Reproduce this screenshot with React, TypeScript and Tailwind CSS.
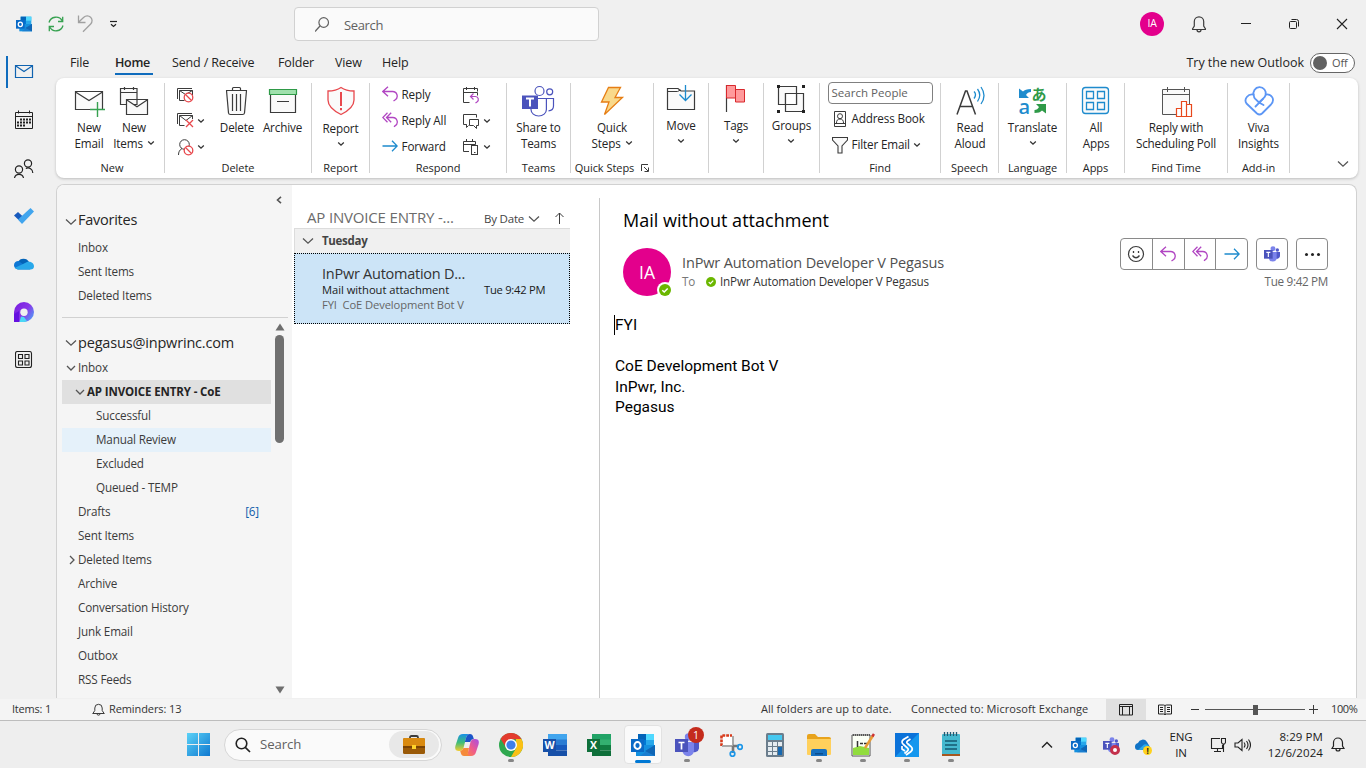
import React from "react";

type IconProps = { v: string; c: string; children: React.ReactNode };

/* Line-drawn icon; the view box is expressed in window pixels. */
const Svg = ({ v, c, children }: IconProps) => (
  <svg viewBox={v} className={`shrink-0 ${c}`} fill="none" stroke="#3b3b3b" strokeWidth="1">
    {children}
  </svg>
);

const Down = ({ c = "" }: { c?: string }) => (
  <svg viewBox="0 0 8 6" className={`h-[6px] w-[8px] shrink-0 ${c}`} fill="none" stroke="#333" strokeWidth="1.3">
    <path d="M1.200 1.500 4 4.200 6.800 1.500" />
  </svg>
);

const Caret = ({ c = "" }: { c?: string }) => (
  <svg viewBox="0 0 12 8" className={`h-[8px] w-[12px] shrink-0 ${c}`} fill="none" stroke="#555" strokeWidth="1.3">
    <path d="M1 1.500 6 6.200 11 1.500" />
  </svg>
);

const OutlookLogo = ({ c }: { c: string }) => (
  <svg viewBox="0 0 24 24" className={`shrink-0 ${c}`}>
    <path d="M7 1h16v13H7z" fill="#28a8ea" />
    <path d="M7 1h8v6H7z" fill="#0364b8" />
    <path d="M15 1h8v6h-8z" fill="#50d9ff" />
    <path d="M7 7h8v6H7z" fill="#0078d4" />
    <path d="M5 12h19v11H5z" fill="#1490df" />
    <path d="M24 12v11H9z" fill="#1b7ed0" />
    <path d="M24 12 14 18l10 5z" fill="#1066b5" />
    <path d="M0 6h13v13H0z" fill="#0a6ac7" />
    <ellipse cx="6.5" cy="12.5" rx="3.1" ry="3.4" fill="none" stroke="#fff" strokeWidth="2" />
  </svg>
);

const TeamsLogo = ({ c }: { c: string }) => (
  <svg viewBox="0 0 24 24" className={`shrink-0 ${c}`}>
    <circle cx="20" cy="6" r="2.6" fill="#5059c9" />
    <circle cx="13.5" cy="4" r="3.7" fill="#7b83eb" />
    <path d="M16 9h8v6.500a4.500 4.500 0 0 1-8 2z" fill="#5059c9" />
    <path d="M7.500 9H19v8.500a5.700 5.700 0 0 1-11.500 0z" fill="#7b83eb" />
    <path d="M0 6h13v13H0z" fill="#4b53bc" />
    <path d="M3.500 9.500h6M6.500 9.500v7" stroke="#fff" strokeWidth="1.700" />
  </svg>
);

const ReplyArrow = ({ c }: { c: string }) => (
  <svg viewBox="0 0 16 16" className={`shrink-0 ${c}`} fill="none" stroke="#b146c2" strokeWidth="1.300">
    <path d="M6 .800.800 5.500 6 10.200M1 5.500h9.500a4.600 4.600 0 0 1 2.500 8.500l-1.500 1" />
  </svg>
);
const ReplyAllArrow = ({ c }: { c: string }) => (
  <svg viewBox="0 0 16 16" className={`shrink-0 ${c}`} fill="none" stroke="#b146c2" strokeWidth="1.300">
    <path d="M5.500.800.800 5.500l4.700 4.700M9.200.800 4.500 5.500l4.700 4.700M4.700 5.500h6a4.500 4.500 0 0 1 2.300 8.400l-1 .900" />
  </svg>
);
const ForwardArrow = ({ c }: { c: string }) => (
  <svg viewBox="0 0 16 16" className={`shrink-0 ${c}`} fill="none" stroke="#1e8bcd" strokeWidth="1.300">
    <path d="M.500 8h14.500M10 2.800 15.200 8 10 13.200" />
  </svg>
);
const Block = ({ x, y, r = 4.3 }: { x: number; y: number; r?: number }) => (
  <g stroke="#e8484d" strokeWidth="1.300">
    <circle cx={x} cy={y} r={r} fill="#fff" />
    <path d={`M${x - 3} ${y - 3}l6 6`} />
  </g>
);

/* ---------- Title bar ---------- */
const TitleBar = () => (
  <header className="flex h-[48px] shrink-0 items-center pl-4">
    <OutlookLogo c="h-4 w-4" />
    <Svg v="48 16 16 16" c="ml-4 h-4 w-4">
      <g stroke="#36a150" strokeWidth="1.300">
        <path d="M49 22.500a7.200 7.200 0 0 1 13.300-1.500M63 25.500a7.200 7.200 0 0 1-13.300 1.500" />
        <path d="M62.700 16.800v4.700H58M49.300 31.200v-4.700H54" />
      </g>
    </Svg>
    <Svg v="77 15 16 18" c="ml-[13px] h-[18px] w-4">
      <path d="M78.500 15.500v7h7M78.800 22l5-4.700a4.800 4.800 0 0 1 6.900 6.700l-7.700 7.700" stroke="#a0a0a0" strokeWidth="1.300" />
    </Svg>
    <Svg v="109 20 9 8" c="ml-4 h-2 w-[9px]">
      <path d="M110 21.500h7" strokeWidth="1.200" stroke="#222" />
      <path d="M111 24.200l2.500 2.300 2.500-2.300" strokeWidth="1.200" stroke="#222" />
    </Svg>
    <div className="ml-[176px] flex h-[34px] w-[305px] items-center rounded border border-[#d1d1d1] bg-[#fafafa] pl-5">
      <Svg v="315 15 16 17" c="h-[17px] w-4">
        <circle cx="323.700" cy="21.500" r="4.800" stroke="#616161" strokeWidth="1.200" />
        <path d="M320 25l-5 5.500" stroke="#616161" strokeWidth="1.200" />
      </Svg>
      <span className="ml-[13px] pt-[3px] text-[13px] tracking-[-0.35px] text-[#616161]">Search</span>
    </div>
    <div className="ml-[541px] flex h-6 w-6 items-center justify-center rounded-full bg-[#e3008c] text-[10.500px] tracking-[-0.2px] text-white">IA</div>
    <Svg v="1191 15 16 18" c="ml-[27px] h-[18px] w-4">
      <path d="M1192 29.500h14M1192.300 29.300l2-3.300v-4.500a4.700 4.700 0 0 1 9.400 0v4.500l2 3.300M1197 29.800a2 2 0 0 0 4 0" strokeWidth="1.200" />
    </Svg>
    <Svg v="1241 19 10 10" c="ml-[34px] h-[10px] w-[10px]"><path d="M1241 23.500h10" stroke="#222" /></Svg>
    <Svg v="1288 18 12 12" c="ml-[37px] h-3 w-3">
      <rect x="1289.500" y="21.500" width="7" height="7" rx="1" stroke="#222" />
      <path d="M1291.500 19.500h5a2 2 0 0 1 2 2v5" stroke="#222" />
    </Svg>
    <Svg v="1336 18 12 12" c="ml-9 h-3 w-3"><path d="M1337 19l10 10M1347 19l-10 10" stroke="#222" strokeWidth="1.100" /></Svg>
  </header>
);

/* ---------- Left app rail ---------- */
const Rail = () => (
  <nav className="flex w-[56px] shrink-0 flex-col">
    <div className="flex h-12 items-center">
      <div className="ml-[6px] h-8 w-[2px] bg-[#0f6cbd]" />
      <Svg v="14 64 20 16" c="ml-[6px] h-4 w-5">
        <path d="M15.500 65.500h17v12h-17zM15.500 65.800l8.500 5.700 8.500-5.700" stroke="#1063b0" strokeWidth="1.200" />
      </Svg>
    </div>
    <div className="flex h-12 items-center pl-[14px]">
      <Svg v="14 110 20 20" c="h-5 w-5">
        <path d="M15.500 112.500h17v16h-17zM15.500 116.500h17M18.500 110.500v3M29.500 110.500v3" stroke="#222" />
        <path d="M20 119.500h11M17 122.500h14M17 125.500h8" stroke="#222" strokeWidth="2" strokeDasharray="2 1" />
      </Svg>
    </div>
    <div className="flex h-12 items-center pl-[13px]">
      <Svg v="13 157 21 21" c="h-[21px] w-[21px]">
        <g stroke="#222" strokeWidth="1.200">
          <circle cx="19" cy="168.500" r="3.600" /><circle cx="28" cy="162.500" r="3.600" />
          <path d="M14.500 177a4.600 4.600 0 0 1 9 0M25.800 167.500a4.800 4.800 0 0 1 7 4.500" />
        </g>
      </Svg>
    </div>
    <div className="flex h-12 items-center pl-[14px]">
      <svg viewBox="14 207 20 18" className="h-[18px] w-5">
        <path d="M14 215.500l4-3.500 6.500 6-3 4.800z" fill="#185abd" />
        <path d="M18 219.500 30.500 208l3.500 3.500-12 12.500z" fill="#41a5ee" />
      </svg>
    </div>
    <div className="flex h-12 items-center pb-[3px] pl-[14px]">
      <svg viewBox="14 256 20 14" className="h-[14px] w-5">
        <path d="M18 262a6 5.600 0 0 1 11 0l-4 6-8-2z" fill="#0364b8" />
        <path d="M18 269.500a4.200 4.200 0 0 1 .500-8.500l12 8.500z" fill="#0f78d4" />
        <path d="M22 264.500l5-2.500c5-1 7 2.200 7 4.200a3.500 3.500 0 0 1-3.500 3.300H18l-3.400-1.500z" fill="#28a8ea" />
      </svg>
    </div>
    <div className="flex h-12 items-center pl-[14px]">
      <svg viewBox="0 0 20 20" className="h-5 w-5">
        <defs>
          <linearGradient id="loop" x1="0" y1="0.200" x2="1" y2="0.900">
            <stop offset="0" stopColor="#7a1fe0" /><stop offset=".5" stopColor="#8a35e8" /><stop offset="1" stopColor="#4aa8f8" />
          </linearGradient>
        </defs>
        <path d="M0 20V10A10 10 0 1 1 10 20z" fill="url(#loop)" />
        <path d="M0 20v-8l5-3v11z" fill="#6610e0" />
        <path d="M5.500 20 7 14.500l3 .500 3 4.300-3 .700z" fill="#4bd8f5" />
        <circle cx="10" cy="10.300" r="3.700" fill="#f0f0f0" />
      </svg>
    </div>
    <div className="flex h-12 items-center pl-[15px]">
      <Svg v="14 350 18 18" c="h-[18px] w-[18px]">
        <g stroke="#222" strokeWidth="1.100">
          <rect x="14.500" y="350.500" width="16" height="16" rx="2" />
          <path d="M17.500 353.500h4v4h-4zM24 353.500h4v4h-4zM17.500 360h4v4h-4zM24 360h4v4h-4z" />
        </g>
      </Svg>
    </div>
  </nav>
);

/* ---------- Ribbon ---------- */
const Tabs = () => (
  <div className="flex h-[30px] shrink-0 items-center pl-[14px] pt-px text-[12.500px] tracking-[-0.15px] text-[#242424]">
    <span className="w-[45px]">File</span>
    <span className="relative w-[57px] font-semibold tracking-[-0.3px]">
      Home
      <i className="absolute -bottom-[2px] left-0 h-[2px] w-[38px] bg-[#0f6cbd]" />
    </span>
    <span className="w-[106px]">Send / Receive</span>
    <span className="w-[57px]">Folder</span>
    <span className="w-[47px]">View</span>
    <span>Help</span>
    <span className="ml-auto tracking-[-0.03px]">Try the new Outlook</span>
    <div className="-mt-px ml-[6px] mr-[11px] flex h-5 w-[45px] items-center rounded-full border border-[#666] bg-white pl-[2px]">
      <i className="h-[14px] w-[14px] rounded-full bg-[#616161]" />
      <span className="ml-[5px] text-[11px] text-[#555]">Off</span>
    </div>
  </div>
);

const Group = ({ w, label, children }: { w: string; label?: React.ReactNode; children: React.ReactNode }) => (
  <section className={`flex h-[90px] shrink-0 flex-col border-r border-[#d1d1d1] ${w}`}>
    <div className="flex h-[77px] shrink-0 justify-center">{children}</div>
    <div className="flex h-[16px] shrink-0 items-center justify-center whitespace-nowrap text-[11px] leading-[16px] tracking-[-0.05px]">{label}</div>
  </section>
);

const Big = ({ w, icon, a, b, drop }: { w: string; icon: React.ReactNode; a: string; b?: string; drop?: boolean }) => (
  <div className={`flex shrink-0 flex-col items-center whitespace-nowrap pt-[2px] leading-4 ${w}`}>
    <div className="flex h-[34px] justify-center">{icon}</div>
    <span>{a}</span>
    <span className="flex h-4 items-center gap-[4px]">{b}{drop && <Down />}</span>
  </div>
);
const Mid = ({ icon, a }: { icon: React.ReactNode; a: string }) => (
  <div className="flex flex-col items-center pt-[2px] leading-4">
    <div className="flex h-[32px]">{icon}</div>
    <span>{a}</span>
    <Down c="mt-[5px]" />
  </div>
);

const Ribbon = () => (
  <div className="mr-2 flex h-[100px] shrink-0 rounded-lg bg-white pt-[5px] text-[11.700px] tracking-[-0.15px] text-[#242424] shadow-[0_1px_3px_rgba(0,0,0,0.22)]">
    <Group w="w-[109px]" label={<span className="pl-1">New</span>}>
      <div className="flex pl-[3px]">
        <Big w="w-[45px]" a="New" b="Email" icon={
          <Svg v="73 85 32 32" c="h-8 w-8">
            <path d="M75.500 91.500h27v18h-27zM75.500 92l13.500 8.500L102.500 92" fill="#fafafa" strokeWidth="1.200" />
            <path d="M97.500 102v15M90 109.500h15" stroke="#36a150" strokeWidth="1.400" />
          </Svg>} />
        <Big w="w-[45px]" a="New" b="Items" drop icon={
          <Svg v="118 85 32 32" c="h-8 w-8">
            <path d="M120.500 88.500h16.500v16h-16.500zM120.500 92.500h16.500M124.500 87v3M133.500 87v3" fill="#fafafa" strokeWidth="1.200" />
            <path d="M126.500 99.500h21v15h-21zM126.500 99.800l10.500 7 10.500-7" fill="#fafafa" strokeWidth="1.200" />
          </Svg>} />
      </div>
    </Group>

    <Group w="w-[147px]" label="Delete">
      <div className="ml-[11px] flex w-[40px] flex-col gap-[9px] pt-[3px]">
        <Svg v="176 86 18 17" c="h-[17px] w-[18px]">
          <path d="M177.500 99V88.500H192M192.500 95v-4.500h-13v10h5M179.500 90.500l6 4 7-4" />
          <Block x={188.500} y={97.500} />
        </Svg>
        <div className="flex items-center gap-[3px]">
          <Svg v="176 113 18 17" c="h-[17px] w-[18px]">
            <path d="M177.500 125v-10.500H192M192.500 120v-3.500h-13v10h5M179.500 116.500l6.500 5 6.500-5" />
            <path d="M186 121l7 7M193 121l-7 7" stroke="#e8484d" strokeWidth="1.300" />
          </Svg>
          <Down />
        </div>
        <div className="flex items-center gap-[3px]">
          <Svg v="176 137 18 18" c="h-[18px] w-[18px]">
            <circle cx="184.500" cy="143.500" r="4.800" />
            <path d="M178.500 154c0-3 1-5 3.500-6.500" />
            <Block x={188.500} y={149.500} />
          </Svg>
          <Down />
        </div>
      </div>
      <Big w="w-[42px]" a="Delete" icon={
        <Svg v="220 85 32 32" c="h-8 w-8">
          <path d="M225.500 90.500 227.500 113q.2 1.500 2 1.500h12q1.800 0 2-1.500l2-22.500" fill="#fafafa" strokeWidth="1.200" />
          <path d="M225 90.500h21M231.500 90v-1.500q0-1 1-1h6q1 0 1 1v1.500M231.500 94v17M235.500 94v17M239.500 94v17" strokeWidth="1.200" />
        </Svg>} />
      <Big w="w-[49px]" a="Archive" icon={
        <Svg v="265 85 32 32" c="h-8 w-8">
          <path d="M268.500 93h25v19.500h-25zM275 101.500h12" fill="#fafafa" strokeWidth="1.200" />
          <path d="M267.500 89.500h27v5h-27z" fill="#9fe0ac" stroke="#2f9a48" strokeWidth="1.200" />
        </Svg>} />
      <div className="flex-1" />
    </Group>

    <Group w="w-[58px]" label="Report">
      <div className="pt-px"><Big w="w-[57px]" a="Report" drop icon={
        <Svg v="325 86 32 32" c="h-8 w-8">
          <path d="M341 87.500c4 2.800 8 3.500 13 3.500v9c0 7-6 11-13 14.500-7-3.500-13-7.500-13-14.500v-9c5 0 9-.700 13-3.500z" fill="#fafafa" stroke="#e8484d" strokeWidth="1.300" />
          <path d="M341 92v14M341 108v2.200" stroke="#e8484d" strokeWidth="2" />
        </Svg>} /></div>
    </Group>

    <Group w="w-[137px]" label="Respond">
      <div className="-mt-[2px] flex w-[81px] flex-col text-[11.700px] leading-[18px]">
        <div className="flex h-[26px] items-center"><ReplyArrow c="mr-1 h-4 w-4" />Reply</div>
        <div className="flex h-[26px] items-center"><ReplyAllArrow c="mr-1 h-4 w-4" />Reply All</div>
        <div className="flex h-[26px] items-center"><ForwardArrow c="mr-1 h-4 w-4" />Forward</div>
      </div>
      <div className="-mt-px mr-px flex w-[31px] flex-col">
        <div className="flex h-[26px] items-center">
          <Svg v="463 86 17 17" c="h-[17px] w-[17px]">
            <path d="M469.500 101.500h-6v-14h14v3M463.500 91.500h14v3M466.500 86v3M474.500 86v3" />
            <path d="M473.500 92.500 470.500 95.500l3 3M471 95.500h4.500a3 3 0 0 1 1.500 5.500l-1.500 1" stroke="#b146c2" strokeWidth="1.200" />
          </Svg>
        </div>
        <div className="flex h-[26px] items-center gap-[3px]">
          <Svg v="463 111 17 17" c="h-[17px] w-[17px]">
            <path d="M466.500 123.500v-1h-3v-10h13v3M466.500 122.500v3l2-2" />
            <path d="M469.500 117.500h9v6h-2v3l-3-3h-4z" fill="#fff" />
          </Svg>
          <Down />
        </div>
        <div className="flex h-[26px] items-center gap-[3px]">
          <Svg v="463 138 17 17" c="h-[17px] w-[17px]">
            <path d="M469 150.500h-5.500v-10h12v3M463.500 143.500h12M466.500 138v3M472.500 138v3" />
            <rect x="471.500" y="144.500" width="6" height="9" fill="#fff" /><path d="M474 151.500h1.500" />
          </Svg>
          <Down />
        </div>
      </div>
    </Group>

    <Group w="w-[64px]" label="Teams">
      <Big w="w-[62px]" a="Share to" b="Teams" icon={
        <Svg v="523 85 33 32" c="h-8 w-[33px]">
          <g stroke="#4b53bc" strokeWidth="1.200">
            <circle cx="540.500" cy="91" r="4.500" /><circle cx="550.700" cy="91.800" r="3" />
            <path d="M532 108v1.500a7.700 6.500 0 0 0 15.400 0V98.500H538M547.500 98.500h7v7.500q0 4.500-5 4.800" />
            <path d="M523 95.500h16v13.500h-16z" fill="#4b53bc" stroke="none" />
            <path d="M527 98.500h8M531 98.500v8" stroke="#fff" strokeWidth="2" />
          </g>
        </Svg>} />
    </Group>

    <Group w="w-[83px]" label={
      <span className="flex items-center gap-[7px]">Quick Steps
        <Svg v="642 164 8 8" c="h-2 w-2"><path d="M642.500 171v-6.500h6.500M645 167l4 4M649.500 167.500v4h-4" /></Svg>
      </span>}>
      <Big w="w-[80px]" a="Quick" b="Steps" drop icon={
        <Svg v="596 85 32 32" c="h-8 w-8">
          <path d="M608.500 87.500h12l-5.500 10h7.500L604.500 114.500l4.500-12.500h-7.500z" fill="#f9d98b" stroke="#e67e14" strokeWidth="1.300" />
        </Svg>} />
    </Group>

    <Group w="w-[55px]">
      <Mid a="Move" icon={
        <Svg v="665 83 32 32" c="h-8 w-8">
          <path d="M667.500 107.500v-21h10.500l3 2.500h13.500v18.500z" fill="#fafafa" strokeWidth="1.200" />
          <path d="M667.500 89.500h10l3-1.500" />
          <path d="M685.500 81v17.500M679.500 92.500l6 6 6-6" stroke="#1e8bcd" strokeWidth="1.300" />
        </Svg>} />
    </Group>
    <Group w="w-[55px]">
      <Mid a="Tags" icon={
        <Svg v="720 85 32 32" c="h-8 w-8">
          <path d="M726.500 85v27" strokeWidth="1.200" />
          <path d="M726.500 85.500h9v12.500h-9zM735.500 89.500h9v12.500h-9z" fill="#ff9a9c" stroke="#d8282c" />
        </Svg>} />
    </Group>
    <Group w="w-[56px]">
      <Mid a="Groups" icon={
        <Svg v="775 85 32 32" c="h-8 w-8">
          <path d="M778.500 86.500h18v18h-18zM785.500 93.500h18v18h-18z" fill="#fafafa" strokeWidth="1.200" />
          <path d="M785.500 93.500h11v11h-11z" fill="#fff" strokeWidth="1.200" />
          <path d="M777 85h3v3h-3zM802 85h3v3h-3zM777 110h3v3h-3zM802 110h3v3h-3z" fill="#222" stroke="none" />
        </Svg>} />
    </Group>

    <Group w="w-[121px]" label="Find">
      <div className="-mt-px flex w-[105px] flex-col">
        <div className="flex h-[22px] items-center rounded border border-[#808080] pl-[3px] text-[11.500px] tracking-[0.02px] text-[#616161]">Search People</div>
        <div className="mt-[2px] flex h-[26px] items-center">
          <Svg v="833 110 14 17" c="ml-[5px] mr-[5px] h-[17px] w-[14px]">
            <path d="M834.500 110.500h11v15h-11zM834.500 122.500h11" />
            <circle cx="840" cy="115.200" r="2.500" /><path d="M836.500 122c0-2.500 1-4 3.500-4s3.500 1.500 3.500 4" />
          </Svg>Address Book
        </div>
        <div className="flex h-[26px] items-center">
          <Svg v="832 136 16 17" c="ml-1 mr-1 h-[17px] w-4">
            <path d="M832.500 136.500h15v2.500l-5.500 6v7h-4v-7l-5.500-6z" fill="#fafafa" strokeWidth="1.100" />
          </Svg>Filter Email<Down c="ml-[3px]" />
        </div>
      </div>
    </Group>

    <Group w="w-[58px]" label="Speech">
      <div className="pl-px"><Big w="w-[56px]" a="Read" b="Aloud" icon={
        <Svg v="954 85 32 32" c="h-8 w-8">
          <path d="M957 114.500 965.500 91h1.500l8.500 23.500M960 106.500h12.500" strokeWidth="1.500" />
          <path d="M974 91.500q3 3 0 7M977.500 89q4.500 6 0 12.500M981 87q6 8.500 0 17" stroke="#1e8bcd" strokeWidth="1.300" />
        </Svg>} /></div>
    </Group>
    <Group w="w-[68px]" label="Language">
      <Big w="w-[66px]" a="Translate" drop icon={
        <div className="flex h-8 w-[28px] flex-col pt-[1px]">
          <div className="flex h-[15px] items-center gap-px">
            <Svg v="1019 90 12 11" c="h-[11px] w-3"><path d="M1019 90.500v9.500h10l-3-3q1.500-3 5-3v-3q-6 0-8 2.500z" fill="#1e8bcd" stroke="none" /></Svg>
            <span className="font-['Noto_Sans_CJK_JP',sans-serif] text-[15px] font-bold leading-[14px] text-[#2f9a48]">あ</span>
          </div>
          <div className="flex h-[14px] items-center gap-[3px]">
            <span className="-mt-[3px] w-3 font-['Open_Sans',sans-serif] text-[20px] font-semibold leading-[14px] tracking-[-0.5px] text-[#1e8bcd]">a</span>
            <Svg v="1034 104 12 11" c="h-[11px] w-3"><path d="M1046 114.500V105h-10l3 3q-1.500 3-4.500 3v3q5.500 0 7.500-2.500z" fill="#2f9a48" stroke="none" /></Svg>
          </div>
        </div>} />
    </Group>
    <Group w="w-[58px]" label="Apps">
      <div className="pl-px"><Big w="w-[56px]" a="All" b="Apps" icon={
        <Svg v="1080 85 32 32" c="h-8 w-8">
          <g stroke="#1e8bcd" strokeWidth="1.300">
            <rect x="1082.500" y="87.500" width="26" height="26" rx="3" fill="#fafafa" />
            <path d="M1086.500 91.500h7v7h-7zM1097.500 91.500h7v7h-7zM1086.500 102.500h7v7h-7zM1097.500 102.500h7v7h-7z" />
          </g>
        </Svg>} /></div>
    </Group>
    <Group w="w-[103px]" label="Find Time">
      <Big w="w-[100px]" a="Reply with" b="Scheduling Poll" icon={
        <Svg v="1160 85 33 32" c="h-8 w-[33px]">
          <path d="M1162.500 89.500h27v25h-27zM1162.500 94.500h27M1167.500 87v5M1184.500 87v5" fill="#fafafa" stroke="#555" />
          <path d="M1176.500 108.500h5v8h-5zM1181.500 101.500h5v15h-5zM1186.500 104.500h5v12h-5z" fill="#fff" stroke="#e8481c" strokeWidth="1.200" />
        </Svg>} />
    </Group>
    <Group w="w-[62px]" label="Add-in">
      <Big w="w-[60px]" a="Viva" b="Insights" icon={
        <Svg v="0 0 32 32" c="h-8 w-8">
          <g stroke="#5c96f5" strokeWidth="1.800" strokeLinecap="round" strokeLinejoin="round">
            <path d="M10.800 10.500a6.200 6.200 0 1 1 11.800-.500q-.5 1.800-2.200 3.300L16 17.500l-4-3.800q-1-1-1.200-3.200z" />
            <path d="M10.500 9.500C5 8.500.500 14 3.500 18.500L14 28.500q2.500 2 5 0l9-9c4.500-5 .500-10.500-4.500-10M12.500 21.500l7.500-7.700M20.500 20 16 17.500" />
          </g>
        </Svg>} />
    </Group>
    <div className="flex flex-1 items-end justify-end pb-[10px] pr-[9px]"><Caret /></div>
  </div>
);

/* ---------- Folder pane ---------- */
type Folder = { name: string; pad: string; open?: boolean; closed?: boolean; row?: string; count?: string };
const folders: Folder[] = [
  { name: "Inbox", pad: "pl-[4px]", open: true },
  { name: "AP INVOICE ENTRY - CoE", pad: "pl-[13px]", open: true, row: "bg-[#e0e0e0] font-bold text-[#242424] tracking-[-0.12px] text-[11.500px]" },
  { name: "Successful", pad: "pl-[34px]" },
  { name: "Manual Review", pad: "pl-[34px]", row: "bg-[#e5f1fa]" },
  { name: "Excluded", pad: "pl-[34px]" },
  { name: "Queued - TEMP", pad: "pl-[34px]" },
  { name: "Drafts", pad: "pl-[16px]", count: "[6]" },
  { name: "Sent Items", pad: "pl-[16px]" },
  { name: "Deleted Items", pad: "pl-[6px]", closed: true },
  { name: "Archive", pad: "pl-[16px]" },
  { name: "Conversation History", pad: "pl-[16px]" },
  { name: "Junk Email", pad: "pl-[16px]" },
  { name: "Outbox", pad: "pl-[16px]" },
  { name: "RSS Feeds", pad: "pl-[16px]" },
];

const FolderPane = () => (
  <aside className="flex w-[235px] shrink-0 flex-col bg-[#f5f5f5] pl-[5px] text-[11.700px] tracking-[-0.17px] text-[#3b3b3b]">
    <div className="flex h-[22px] items-center justify-end pr-[9px] pt-[7px]">
      <Svg v="0 0 8 8" c="h-2 w-2"><path d="M6 .800 2.500 4 6 7.200" strokeWidth="1.600" stroke="#555" /></Svg>
    </div>
    <div className="mb-[3px] flex h-[26px] items-center pl-[3px] text-[14.500px] tracking-[-0.25px] text-[#262626]"><Caret c="mr-px mt-[3px]" />Favorites</div>
    <div className="flex h-6 items-center pl-4">Inbox</div>
    <div className="flex h-6 items-center pl-4">Sent Items</div>
    <div className="flex h-6 items-center pl-4">Deleted Items</div>
    <div className="mr-1 mt-[9px] border-t border-[#d1d1d1]" />
    <div className="flex flex-1 overflow-hidden">
      <div className="flex w-[209px] flex-col">
        <div className="mt-[13px] flex h-6 shrink-0 items-center pl-[3px] text-[14.500px] tracking-[-0.18px] text-[#262626]"><Caret c="mr-px" />pegasus@inpwrinc.com</div>
        <div className="h-px shrink-0" />
        {folders.map((f) => (
          <div key={f.name} className={`flex h-6 shrink-0 items-center whitespace-nowrap ${f.pad} ${f.row ?? ""}`}>
            {f.open && <svg viewBox="0 0 10 8" className="mr-[2px] h-2 w-[10px]" fill="none" stroke="#555" strokeWidth="1.300"><path d="M1 2l4 4 4-4" /></svg>}
            {f.closed && <svg viewBox="0 0 8 10" className="mr-[2px] h-[10px] w-2" fill="none" stroke="#555" strokeWidth="1.300"><path d="M2 1l4 4-4 4" /></svg>}
            {f.name}
            {f.count && <span className="ml-auto mr-3 text-[#0f5cab]">{f.count}</span>}
          </div>
        ))}
      </div>
      <div className="flex w-[17px] flex-col items-center">
        <svg viewBox="0 0 10 8" className="mt-[5px] h-2 w-[10px]"><path d="M5 .500 9.500 7.500H.500z" fill="#6e6e6e" /></svg>
        <i className="mt-[4px] h-[108px] w-[9px] rounded-full bg-[#707070]" />
        <svg viewBox="0 0 10 8" className="mb-[4px] mt-auto h-2 w-[10px]"><path d="M5 7.500 9.500 .500H.500z" fill="#6e6e6e" /></svg>
      </div>
    </div>
  </aside>
);

/* ---------- Message list ---------- */
const MessageList = () => (
  <section className="flex w-[307px] shrink-0 flex-col pl-[2px]">
    <div className="mt-[21px] flex h-[22px] items-center pl-[13px]">
      <span className="w-[177px] whitespace-nowrap text-[15px] tracking-[-0.17px] text-[#6b6b6b]">AP INVOICE ENTRY -...</span>
      <span className="w-[44px] pt-[3px] text-[11.500px] tracking-[-0.2px] text-[#444]">By Date</span>
      <Caret c="mt-[3px]" />
      <Svg v="554 211 11 13" c="ml-[14px] mt-[2px] h-[13px] w-[11px]"><path d="M559.500 212v11M555.500 216l4-4 4 4" /></Svg>
    </div>
    <div className="flex h-[25px] w-[276px] items-center border-l border-t border-[#dcdcdc] bg-[#f0f0f0] pl-[7px] text-[11.500px] font-bold tracking-[-0.3px] text-[#444]">
      <Caret c="mr-2" />Tuesday
    </div>
    <article className="flex h-[71px] w-[276px] flex-col border border-dotted border-black bg-[#cce4f7] pl-[27px] pt-[10px]">
      <div className="h-[18px] text-[14.500px] leading-[19px] tracking-[-0.25px] text-[#333]">InPwr Automation D...</div>
      <div className="flex h-[15px] text-[11.200px] leading-[15px] tracking-[-0.03px] text-[#1b1b1b]"><span className="w-[162px]">Mail without attachment</span><span className="tracking-[-0.25px]">Tue 9:42 PM</span></div>
      <div className="h-[15px] text-[11.200px] leading-[15px] tracking-[-0.1px] text-[#666]">FYI&nbsp; CoE Development Bot V</div>
    </article>
  </section>
);

/* ---------- Reading pane ---------- */
const Check = ({ c }: { c: string }) => (
  <svg viewBox="0 0 12 12" className={`shrink-0 ${c}`}><circle cx="6" cy="6" r="6" fill="#6bb700" /><path d="M3.300 6.200 5.200 8 8.700 4.400" fill="none" stroke="#fff" strokeWidth="1.500" /></svg>
);

const ReadingPane = () => (
  <main className="mt-[13px] flex flex-1 flex-col border-l border-[#c8c8c8]">
    <h1 className="mt-[9px] h-[26px] pl-[23px] text-[18px] leading-[26px] tracking-[0.02px] text-black">Mail without attachment</h1>
    <div className="flex pl-[23px] pr-7">
      <div className="relative mt-[15px] flex h-12 w-12 items-center justify-center rounded-full bg-[#e3008c] text-[17.500px] text-white">
        IA
        <span className="absolute -bottom-[2px] -right-[2px] rounded-full bg-white p-[2px]"><Check c="block h-3 w-3" /></span>
      </div>
      <div className="ml-[11px] mt-[20px] flex flex-col">
        <div className="h-5 text-[14.500px] leading-5 tracking-[-0.15px] text-[#505050]">InPwr Automation Developer V Pegasus</div>
        <div className="flex h-[18px] items-center text-[11.700px] tracking-[-0.18px] text-[#333]">
          <span className="w-[24px] text-[#777]">To</span><Check c="mr-[4px] h-[10px] w-[10px]" />InPwr Automation Developer V Pegasus
        </div>
      </div>
      <div className="ml-auto mt-[5px] flex flex-col items-end">
        <div className="flex gap-2">
          <div className="flex h-8 w-32 divide-x divide-[#8a8a8a] rounded border border-[#8a8a8a]">
            <span className="flex flex-1 items-center justify-center">
              <Svg v="0 0 18 18" c="h-[18px] w-[18px]"><circle cx="9" cy="9" r="7.500" strokeWidth="1.200" /><path d="M5.500 10.500q3.500 4.500 7 0M6.500 6v2M11.500 6v2" strokeWidth="1.300" /></Svg>
            </span>
            <span className="flex flex-1 items-center justify-center"><ReplyArrow c="h-4 w-4" /></span>
            <span className="flex flex-1 items-center justify-center"><ReplyAllArrow c="h-4 w-4" /></span>
            <span className="flex flex-1 items-center justify-center"><ForwardArrow c="h-4 w-4" /></span>
          </div>
          <div className="flex h-8 w-8 items-center justify-center rounded border border-[#8a8a8a]"><TeamsLogo c="h-4 w-4" /></div>
          <div className="flex h-8 w-8 items-center justify-center gap-[3px] rounded border border-[#8a8a8a]">
            <i className="h-[3px] w-[3px] rounded-full bg-[#222]" /><i className="h-[3px] w-[3px] rounded-full bg-[#222]" /><i className="h-[3px] w-[3px] rounded-full bg-[#222]" />
          </div>
        </div>
        <span className="mt-[2px] text-[11.700px] leading-[18px] tracking-[-0.32px] text-[#666]">Tue 9:42 PM</span>
      </div>
    </div>
    <div className="mt-[19px] flex flex-col pl-[15px] font-['Roboto','Liberation_Sans',sans-serif] text-[15.500px] leading-[20.500px] text-black">
      <p className="-ml-px flex items-center"><i className="h-5 w-px bg-black" />FYI</p>
      <p>&nbsp;</p>
      <p>CoE Development Bot V</p>
      <p>InPwr, Inc.</p>
      <p>Pegasus</p>
    </div>
  </main>
);

/* ---------- Status bar ---------- */
const StatusBar = () => (
  <footer className="flex h-[22px] shrink-0 items-center whitespace-nowrap border-b border-[#bdbdbd] bg-[#f4f4f4] pl-3 text-[11px] text-[#333]">
    <span className="w-20 tracking-[-0.2px]">Items: 1</span>
    <Svg v="0 0 13 14" c="mr-[4px] h-[14px] w-[13px]"><path d="M.500 10.500h12M1 10.300l1.800-2.800V5a3.700 3.700 0 0 1 7.400 0v2.500L12 10.300M5 10.700a1.500 1.500 0 0 0 3 0" /></Svg>
    <span className="w-[652px] tracking-[-0.1px]">Reminders: 13</span>
    <span className="w-[150px] tracking-[0.06px]">All folders are up to date.</span>
    <span className="w-[195px] tracking-[0.08px]">Connected to: Microsoft Exchange</span>
    <div className="flex h-full w-10 items-center justify-center bg-[#e0e0e0]">
      <Svg v="0 0 14 12" c="h-3 w-[14px]"><path d="M.500.500h13v10.500H.500zM.500 2.500h13M3.500 2.500V11M10.500 2.500V11" stroke="#222" /></Svg>
    </div>
    <Svg v="0 0 14 12" c="ml-[12px] h-3 w-[14px]"><path d="M.500 1h5q1.500 0 1.500 1 0-1 1.500-1h5v9h-5Q7 10 7 11q0-1-1.500-1h-5zM7 2v9M2 3.500h3M2 5.500h3M2 7.500h3M9 3.500h3M9 5.500h3M9 7.500h3" stroke="#222" /></Svg>
    <i className="ml-[19px] h-px w-2 bg-[#333]" />
    <div className="ml-[6px] flex h-[10px] w-[100px] items-center"><i className="h-px w-12 bg-[#555]" /><i className="h-[10px] w-[5px] bg-[#555]" /><i className="h-px flex-1 bg-[#555]" /></div>
    <Svg v="0 0 9 9" c="ml-1 h-[9px] w-[9px]"><path d="M0 4.500h9M4.500 0v9" /></Svg>
    <span className="ml-[13px] tracking-[-0.4px]">100%</span>
  </footer>
);

/* ---------- Taskbar ---------- */
const App24 = ({ children, run, active }: { children: React.ReactNode; run?: boolean; active?: boolean }) => (
  <div className={`relative mx-[3px] flex h-[39px] w-[38px] shrink-0 items-center justify-center rounded ${active ? "border border-[#e2e2e2] bg-[#fafafa]" : ""}`}>
    {children}
    {run && <i className="absolute bottom-[2px] h-[3px] w-[6px] rounded-full bg-[#868686]" />}
    {active && <i className="absolute bottom-0 h-[3px] w-4 rounded-full bg-[#0078d4]" />}
  </div>
);

const OfficeTile = ({ l, a, b, d, e }: { l: string; a: string; b: string; d: string; e: string }) => (
  <div className="relative flex h-[22px] w-6 items-center">
    <svg viewBox="0 0 24 22" className="h-[22px] w-6">
      <path d="M5 0h19v6H5z" fill={a} /><path d="M5 5.500h19V11H5z" fill={b} /><path d="M5 11h19v5.500H5z" fill={d} /><path d="M5 16.500h19V22H5z" fill={e} />
      <path d="M0 5h13v13H0z" fill={e} />
    </svg>
    <span className="absolute left-0 top-[5px] w-[13px] text-center text-[10.500px] font-bold leading-[13px] text-white">{l}</span>
  </div>
);

const Taskbar = () => (
  <footer className="flex h-[47px] shrink-0 items-center bg-[#eee]">
    <svg viewBox="0 0 23 23" className="ml-[187px] h-[23px] w-[23px] shrink-0">
      <defs><linearGradient id="win" x1="0" y1="0" x2="1" y2="1"><stop offset="0" stopColor="#5bd2f7" /><stop offset="1" stopColor="#0f78d0" /></linearGradient></defs>
      <path d="M0 0h11v11H0zM12 0h11v11H12zM0 12h11v11H0zM12 12h11v11H12z" fill="url(#win)" />
    </svg>
    <div className="ml-[14px] flex h-8 w-[218px] shrink-0 items-center rounded-full border border-[#d6d6d6] bg-[#fafafa] pl-[10px] pr-[2px]">
      <Svg v="0 0 16 16" c="h-4 w-4"><circle cx="6.500" cy="6.500" r="5.300" stroke="#222" strokeWidth="1.600" /><path d="M10.300 10.300 15 15" stroke="#222" strokeWidth="1.700" /></Svg>
      <span className="ml-[9px] text-[13.200px] tracking-[-0.1px] text-[#616161]">Search</span>
      <div className="ml-auto flex h-[27px] w-[50px] items-center justify-center rounded-full bg-[#e8e8e8]">
        <svg viewBox="0 0 22 20" className="h-5 w-[22px]">
          <path d="M7 4V2.500Q7 1 8.500 1h5Q15 1 15 2.500V4" fill="none" stroke="#3b3b3b" strokeWidth="1.800" />
          <rect y="3" width="22" height="16" rx="1.500" fill="#9a5a08" /><path d="M0 4.500Q0 3 1.500 3h19Q22 3 22 4.500V11H0z" fill="#d98a10" />
          <path d="M0 11h22v2H0z" fill="#7a4304" /><path d="M9 10h4v4H9z" fill="#ffd42a" />
        </svg>
      </div>
    </div>
    <div className="ml-[3px] flex items-center">
      <App24>
        <svg viewBox="0 0 24 24" className="h-6 w-6">
          <defs>
            <linearGradient id="cpa" x1="0" y1="0" x2="0" y2="1"><stop offset="0" stopColor="#1790e8" /><stop offset=".5" stopColor="#3fbd78" /><stop offset="1" stopColor="#f3cc2f" /></linearGradient>
            <linearGradient id="cpb" x1="1" y1="0" x2="0" y2="1"><stop offset="0" stopColor="#a64ce6" /><stop offset=".5" stopColor="#ee5a8d" /><stop offset="1" stopColor="#ff8a3c" /></linearGradient>
          </defs>
          <path d="M8 1h7q-3 0-4 4L8.500 15q-1 3-4 3H4q-5 0-3.500-5.500L3 5q1-4 5-4z" fill="url(#cpa)" />
          <path d="M16 23H9q3 0 4-4l2.500-10q1-3 4-3h.5q5 0 3.500 5.500L21 19q-1 4-5 4z" fill="url(#cpb)" />
          <path d="M8 1h7q2.500 0 3.200 3l.6 2q-2.800 0-3.600 3H9.800L11 5q1-4 4-4z" fill="#1b55c9" />
          <path d="M16 23H9q-2.500 0-3.200-3L5.200 18q2.500-.2 3.300-3H14l-1 4q-1 4 3 4z" fill="#f58a3a" />
        </svg>
      </App24>
      <App24 run>
        <svg viewBox="0 0 24 24" className="h-6 w-6">
          <circle cx="12" cy="12" r="12" fill="#2fa84f" />
          <path d="M1.600 6A12 12 0 0 1 22.400 6L12 6.500 8 16z" fill="#e33b2e" />
          <path d="M22.400 6A12 12 0 0 1 12 24l5.200-9L17 6z" fill="#fbc116" />
          <circle cx="12" cy="12" r="6" fill="#fff" /><circle cx="12" cy="12" r="4.600" fill="#3e7fea" />
        </svg>
      </App24>
      <App24><OfficeTile l="W" a="#41a5ee" b="#2b7cd3" d="#185abd" e="#1750a8" /></App24>
      <App24><OfficeTile l="X" a="#21a366" b="#33b070" d="#107c41" e="#0f6f3a" /></App24>
      <App24 active><OutlookLogo c="h-6 w-6" /></App24>
      <App24 run>
        <TeamsLogo c="h-6 w-6" />
        <span className="absolute right-[2px] top-[2px] flex h-4 w-4 items-center justify-center rounded-full bg-[#c42b1c] text-[10.500px] leading-4 text-white">1</span>
      </App24>
      <App24>
        <svg viewBox="0 0 24 24" className="h-6 w-6" fill="none">
          <path d="M3 3h11v11H3z" fill="#fff" />
          <path d="M2.500 13V2.500H13" stroke="#d83b1c" strokeWidth="2.600" strokeDasharray="2.800 1" />
          <path d="M14 3v10H3" stroke="#a9a9a9" strokeWidth="2" /><path d="M14 13l6 0M14 13v7" stroke="#777" strokeWidth="2.600" />
          <circle cx="21" cy="14" r="2.300" stroke="#1b96e8" strokeWidth="1.700" /><circle cx="13.500" cy="21" r="2.300" stroke="#1b96e8" strokeWidth="1.700" />
        </svg>
      </App24>
      <App24>
        <svg viewBox="0 0 18 24" className="h-6 w-[18px]">
          <rect width="18" height="24" rx="1.500" fill="#6b7d8c" /><path d="M2 2h14v5H2z" fill="#45c8f0" />
          <path d="M2 9h4v4H2zM7 9h4v4H7zM12 9h4v4h-4zM2 14h4v4H2zM7 14h4v4H7zM2 19h4v3H2zM7 19h4v3H7z" fill="#e4ebf0" /><path d="M12 14h4v8h-4z" fill="#1668b0" />
        </svg>
      </App24>
      <App24 run>
        <svg viewBox="0 0 24 22" className="h-[22px] w-6">
          <path d="M0 2q0-2 2-2h6l3 3h11q2 0 2 2v15H0z" fill="#e8a31c" /><path d="M0 5h24v15q0 1-1 1H1q-1 0-1-1z" fill="#ffd05c" />
          <path d="M4 22v-5q0-2 2-2h12q2 0 2 2v5z" fill="#1670c0" /><path d="M8 19h8v1.500H8z" fill="#0b4d8e" />
        </svg>
      </App24>
      <App24 run>
        <svg viewBox="0 0 24 24" className="h-6 w-6">
          <path d="M1 2h18v21H1z" fill="#fbfff6" stroke="#555" /><path d="M2 15l7-2 9 2v7H2z" fill="#91dc3d" />
          <path d="M2 2h17" stroke="#555" strokeWidth="2" strokeDasharray="1 1" /><path d="M6.500 8v6M9 10.500h3M13 10.500h3" stroke="#333" strokeWidth="1.500" />
          <path d="M22 2.500 14 15" stroke="#e89b35" strokeWidth="2.500" /><path d="M23 1 21.300 3.500" stroke="#c33" strokeWidth="2.500" />
        </svg>
      </App24>
      <App24 run>
        <svg viewBox="0 0 24 24" className="h-6 w-6" fill="none">
          <path d="M0 0h24v24H0z" fill="#0b72d9" /><path d="M0 24 24 0v24z" fill="#1597ee" />
          <path d="M13.500 3.500 8.500 6.500q-3 2.500 0 5l4 3.500q1.500 1.500 0 3l-3 2.500M15.500 6 12.500 8q-1.500 1.200 0 2.500l3.500 3q2.500 2.500 0 5l-5 3.500M7 13v3l3 2" stroke="#fff" strokeWidth="1.700" />
        </svg>
      </App24>
      <App24 run>
        <svg viewBox="0 0 20 25" className="h-[25px] w-5">
          <rect x="1" y="2" width="18" height="22" rx="1" fill="#45b9cf" /><path d="M1 22h18v2H1z" fill="#a65720" />
          <path d="M3.500 0v4M6.500 0v4M9.500 0v4M12.500 0v4M15.500 0v4" stroke="#245a72" strokeWidth="1.300" /><path d="M4 9h12M4 13h12M4 17h12" stroke="#155a72" strokeWidth="1.600" />
        </svg>
      </App24>
    </div>
    <div className="ml-[68px] flex flex-1 items-center whitespace-nowrap text-[11.500px] leading-[15.500px] tracking-[-0.1px] text-[#1b1b1b]">
      <Svg v="0 0 12 8" c="h-2 w-3"><path d="M1 6.500 6 1.500l5 5" stroke="#222" strokeWidth="1.400" /></Svg>
      <OutlookLogo c="ml-[18px] h-4 w-4" />
      <div className="relative ml-4">
        <TeamsLogo c="h-4 w-4" />
        <span className="absolute -bottom-[2px] -right-px h-[10px] w-[10px] rounded-full border-[3px] border-[#c4314b] bg-white" />
      </div>
      <div className="relative ml-4">
        <svg viewBox="0 0 16 12" className="h-3 w-4"><path d="M0 8a4 4 0 0 1 3-4 5 5 0 0 1 9-1l3 5-4 3H3q-3 0-3-3z" fill="#1173c6" /><path d="M3 11 9 5.500q5-1 6 5z" fill="#28a8ea" /></svg>
        <span className="absolute -bottom-[4px] -right-px flex h-[9px] w-[9px] items-center justify-center rounded-full bg-[#ffd21c] text-[8px] font-bold leading-[9px]">!</span>
      </div>
      <div className="ml-[14px] w-8 text-center">ENG<br />IN</div>
      <Svg v="0 0 16 16" c="ml-[13px] h-4 w-4"><path d="M10 1.500H1.500v10h11V8M4 14.500h7M7.500 12v2.500M13.500 7v8M11.500 1.500h4v4l-1 1.500h-2l-1-1.500z" stroke="#222" strokeWidth="1.100" /></Svg>
      <Svg v="0 0 17 14" c="ml-[8px] h-[14px] w-[17px]"><path d="M1 5h3l4-3.500v11L4 9H1zM10 4.500q2 2.500 0 5M12.500 3q3 4 0 8M14.500 1.500q4 5.500 0 11" stroke="#222" strokeWidth="1.100" /></Svg>
      <div className="ml-auto text-right tracking-[0.08px]">8:29 PM<br />12/6/2024</div>
      <Svg v="0 0 14 15" c="ml-2 mr-[21px] h-[15px] w-[14px]"><path d="M1 11.500h12L11.500 9V5.500a4.500 4.500 0 0 0-9 0V9zM5 12a2 2 0 0 0 4 0" stroke="#222" strokeWidth="1.200" /></Svg>
    </div>
  </footer>
);

export default function App() {
  return (
    <div className="flex h-[768px] w-[1366px] flex-col overflow-hidden bg-[#f0f0f0] font-['Open_Sans','Noto_Sans',sans-serif]">
      <TitleBar />
      <div className="flex h-[651px] shrink-0">
        <Rail />
        <div className="flex w-[1310px] flex-col">
          <Tabs />
          <Ribbon />
          <div className="mr-[9px] mt-[6px] flex h-[514px] shrink-0 overflow-hidden rounded-t-lg border border-b-0 border-[#d1d1d1] bg-white">
            <FolderPane />
            <MessageList />
            <ReadingPane />
          </div>
        </div>
      </div>
      <StatusBar />
      <Taskbar />
    </div>
  );
}
